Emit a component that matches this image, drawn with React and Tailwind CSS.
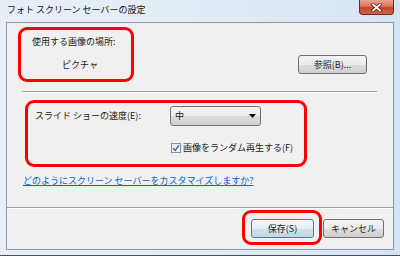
import React from "react";

const font = { fontFamily: '"Noto Sans CJK JP", "Noto Sans", sans-serif' };

function Btn({ children, className = "", focused = false }) {
  return (
    <div
      className={
        "flex items-center justify-center rounded-[3px] border text-[9px] leading-[12px] text-[#1a1a1a] " +
        (focused
          ? "border-[#3c7fb1] bg-[linear-gradient(#f4f8fb_0%,#e6eef4_50%,#d4e0e8_51%,#c9d6df_100%)] "
          : "border-[#707070] bg-[linear-gradient(#f3f3f3_0%,#ebebeb_50%,#dddddd_51%,#cfcfcf_100%)] ") +
        className
      }
    >
      {children}
    </div>
  );
}

export default function App() {
  return (
    <div
      className="relative flex h-[256px] w-[400px] flex-col overflow-hidden bg-[linear-gradient(90deg,#e8eef6_0%,#e3ecf6_50%,#d6e4f2_100%)] border-b border-b-[#4a5058]"
      style={font}
    >
      {/* title bar */}
      <div className="flex h-[22px] shrink-0 items-start justify-between">
        <div className="pl-[7px] pt-[4px] text-[9px] leading-[12px] text-[#111]">
          フォト スクリーン セーバーの設定
        </div>
        <div className="mr-[6px] flex h-[15px] w-[35px] items-center justify-center rounded-b-[4px] border border-t-0 border-[#7a2418] bg-[linear-gradient(#e8a592_0%,#d9775f_45%,#c2452b_55%,#d0664c_100%)]">
          <svg width="11" height="9" viewBox="0 0 11 9">
            <path d="M2 1.5 L9 7.5 M9 1.5 L2 7.5" stroke="#5a1a10" strokeWidth="3.2" strokeLinecap="square" />
            <path d="M2 1.5 L9 7.5 M9 1.5 L2 7.5" stroke="#ffffff" strokeWidth="1.8" strokeLinecap="square" />
          </svg>
        </div>
      </div>

      {/* content */}
      <div className="mx-[6px] flex h-[228px] shrink-0 flex-col border border-[#8d99a6] bg-[#f0f0f0] text-[9px] leading-[12px] text-[#1a1a1a]">
        <div className="pl-[25px] pt-[13px]">使用する画像の場所:</div>
        <div className="mt-[7px] flex h-[19px] items-center">
          <div className="pl-[55px]">ピクチャ</div>
          <Btn className="ml-auto mr-[26px] h-[19px] w-[69px]">参照(B)...</Btn>
        </div>
        <div className="ml-[15px] mt-[17px] w-[355px]">
          <div className="h-px bg-[#a0a0a0]" />
          <div className="h-px bg-white" />
        </div>
        <div className="mt-[13px] flex h-[20px] items-center">
          <div className="w-[163px] pl-[28px]">スライド ショーの速度(E):</div>
          <div className="flex h-[20px] w-[91px] items-center justify-between rounded-[3px] border border-[#707070] bg-[linear-gradient(#f3f3f3_0%,#ebebeb_50%,#dddddd_51%,#cfcfcf_100%)] pl-[4px] pr-[4px]">
            <span>中</span>
            <svg width="7" height="4" viewBox="0 0 7 4">
              <path d="M0 0 H7 L3.5 4 Z" fill="#111" />
            </svg>
          </div>
        </div>
        <div className="mt-[16px] flex h-[12px] items-center pl-[164px]">
          <div className="flex h-[10px] w-[10px] items-center justify-center border border-[#8e8f8f] bg-[linear-gradient(135deg,#dfe7f0,#f6f8fa)]">
            <svg width="8" height="8" viewBox="0 0 8 8">
              <path d="M1.2 4.2 L3.2 6.3 L6.9 1.3" stroke="#3c5fa8" strokeWidth="1.4" fill="none" />
            </svg>
          </div>
          <span className="ml-[2px]">画像をランダム再生する(F)</span>
        </div>
        <div className="mt-[21px] pl-[16px]">
          <span className="text-[#0066cc] underline">どのようにスクリーン セーバーをカスタマイズしますか?</span>
        </div>
        <div className="mt-[20px]">
          <div className="h-px bg-[#a0a0a0]" />
          <div className="h-px bg-white" />
        </div>
        <div className="mt-[10px] flex h-[19px] items-center justify-end gap-[9px] pr-[9px]">
          <Btn focused className="h-[19px] w-[63px]">保存(S)</Btn>
          <Btn className="h-[19px] w-[61px]">キャンセル</Btn>
        </div>
      </div>

      {/* red annotation boxes */}
      <div className="absolute left-[18px] top-[27px] h-[55px] w-[116px] rounded-[9px] border-[3px] border-[#ff0000]" />
      <div className="absolute left-[25px] top-[100px] h-[67px] w-[282px] rounded-[9px] border-[3px] border-[#ff0000]" />
      <div className="absolute left-[242px] top-[210px] h-[35px] w-[80px] rounded-[9px] border-[3px] border-[#ff0000]" />
    </div>
  );
}
